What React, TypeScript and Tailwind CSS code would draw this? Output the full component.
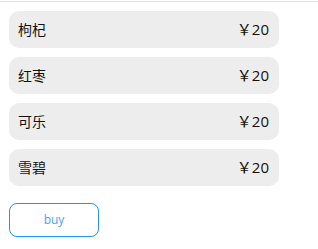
const items = [
  { name: '枸杞', price: 20 },
  { name: '红枣', price: 20 },
  { name: '可乐', price: 20 },
  { name: '雪碧', price: 20 },
];

export default function App() {
  return (
    <div
      className="min-h-[249px] bg-white pt-px"
      style={{ fontFamily: '"Open Sans", "Noto Sans CJK SC", sans-serif' }}
    >
      <div className="border-t border-[#e0e0e0] px-[9px] pt-[9px]">
        <ul className="flex w-[270px] flex-col gap-[9px]">
          {items.map((item) => (
            <li
              key={item.name}
              className="flex h-[37px] items-center justify-between rounded-[10px] bg-[#ededed] pl-[9px] pr-[10px] text-[14px] text-[#111]"
            >
              <span>{item.name}</span>
              <span className="text-[15px]">
                <span className="font-['Noto_Sans_CJK_SC']">￥</span>
                {item.price}
              </span>
            </li>
          ))}
        </ul>
        <button className="mt-[17px] h-[34px] w-[90px] rounded-[8px] border border-[#2196f3] bg-white text-[12px] text-[#42a5f5]">
          buy
        </button>
      </div>
    </div>
  );
}
